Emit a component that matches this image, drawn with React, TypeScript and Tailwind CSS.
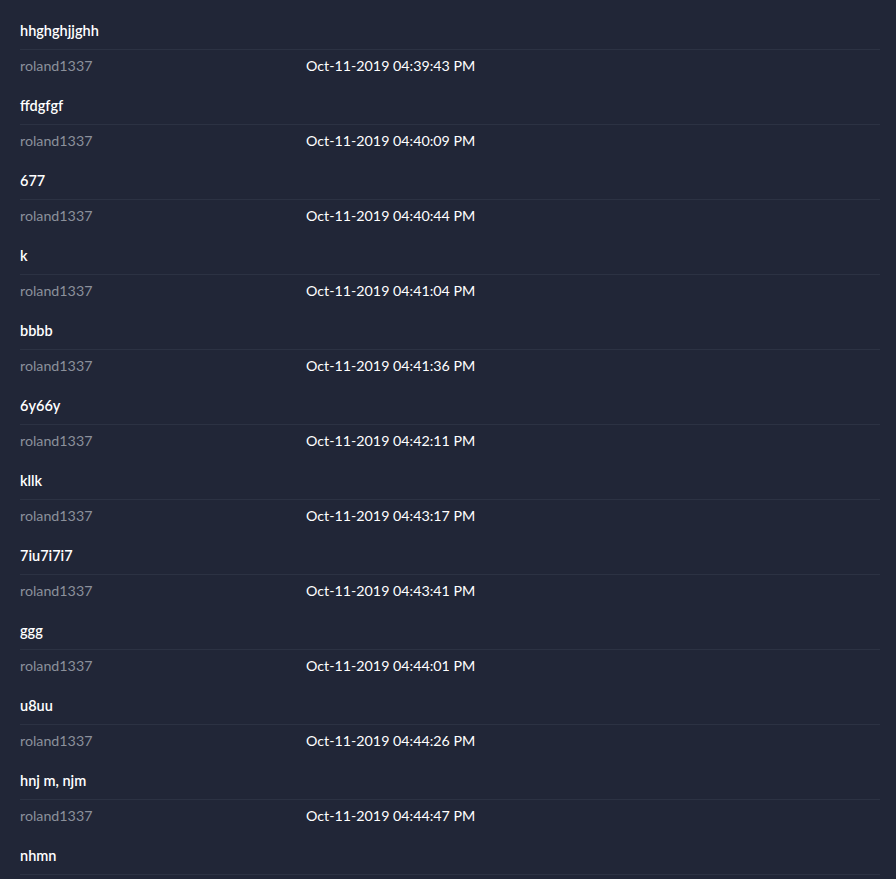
import React from 'react';

const messages = [
  { user: 'roland1337', date: 'Oct-11-2019 04:39:43 PM', text: 'ffdgfgf' },
  { user: 'roland1337', date: 'Oct-11-2019 04:40:09 PM', text: '677' },
  { user: 'roland1337', date: 'Oct-11-2019 04:40:44 PM', text: 'k' },
  { user: 'roland1337', date: 'Oct-11-2019 04:41:04 PM', text: 'bbbb' },
  { user: 'roland1337', date: 'Oct-11-2019 04:41:36 PM', text: '6y66y' },
  { user: 'roland1337', date: 'Oct-11-2019 04:42:11 PM', text: 'kllk' },
  { user: 'roland1337', date: 'Oct-11-2019 04:43:17 PM', text: '7iu7i7i7' },
  { user: 'roland1337', date: 'Oct-11-2019 04:43:41 PM', text: 'ggg' },
  { user: 'roland1337', date: 'Oct-11-2019 04:44:01 PM', text: 'u8uu' },
  { user: 'roland1337', date: 'Oct-11-2019 04:44:26 PM', text: 'hnj m, njm' },
  { user: 'roland1337', date: 'Oct-11-2019 04:44:47 PM', text: 'nhmn' },
];

export default function App() {
  return (
    <div className="min-h-screen bg-[#212637] font-['Lato',sans-serif] text-[14px] leading-5 overflow-hidden">
      <div className="ml-5 mr-4">
        {/* tail of the previous message, scrolled off the top */}
        <div className="pt-[21px] pb-2 border-b border-[#2c3243]">
          <p className="text-white font-semibold text-[14.5px]">hhghghjjghh</p>
        </div>
        {messages.map((m, i) => (
          <div key={i} className="pt-[6px] pb-2 border-b border-[#2c3243]">
            <div className="grid grid-cols-[286px_1fr]">
              <span className="text-[#8b909b] text-[14.25px]">{m.user}</span>
              <span className="text-white text-[14.25px]">{m.date}</span>
            </div>
            <p className="mt-5 text-white font-semibold text-[14.5px]">{m.text}</p>
          </div>
        ))}
      </div>
    </div>
  );
}
